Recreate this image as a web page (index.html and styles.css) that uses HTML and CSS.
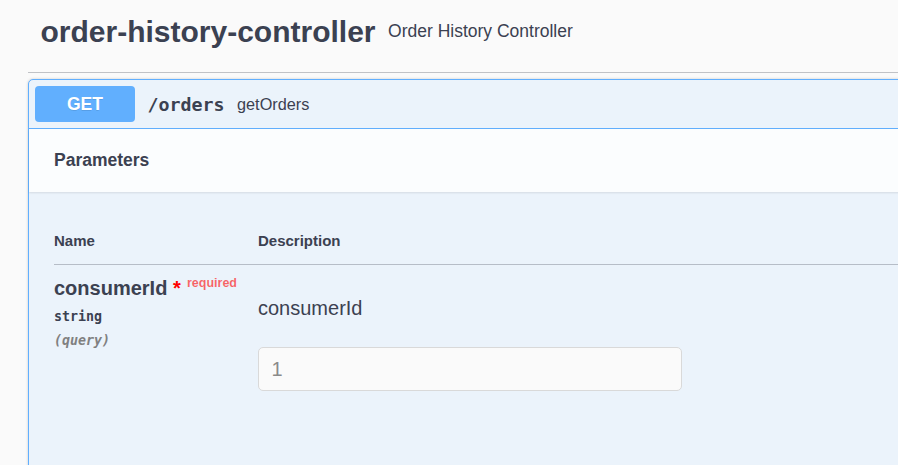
FILE: index.html
```html
<!DOCTYPE html>
<html lang="en">
<head>
<meta charset="utf-8">
<title>order-history-controller</title>
<link rel="stylesheet" href="styles.css">
</head>
<body>
<div class="page">
  <div class="tag">
    <h3 class="tag-title">order-history-controller</h3>
    <small class="tag-desc">Order History Controller</small>
  </div>
  <div class="opblock">
    <div class="summary">
      <span class="method">GET</span>
      <span class="path">/orders</span>
      <span class="summary-desc">getOrders</span>
    </div>
    <div class="section-header">
      <h4 class="section-title">Parameters</h4>
    </div>
    <div class="params">
      <div class="params-head">
        <div class="col-name">Name</div>
        <div class="col-desc">Description</div>
      </div>
      <div class="param-row">
        <div class="col-name">
          <div class="param-name">consumerId<span class="star">&nbsp;*</span><span class="req">required</span></div>
          <div class="param-type">string</div>
          <div class="param-in">(query)</div>
        </div>
        <div class="col-desc">
          <p class="param-desc">consumerId</p>
          <input class="param-input" type="text" value="1">
        </div>
      </div>
    </div>
  </div>
</div>
</body>
</html>
```
FILE: styles.css
```css
html, body {
  margin: 0;
  padding: 0;
  background: #fafafa;
  overflow: hidden;
  width: 898px;
  height: 465px;
}

body {
  font-family: "Liberation Sans", Arial, sans-serif;
  color: #3b4151;
}

.page {
  width: 1100px;
  padding-left: 28px;
}

.tag {
  display: flex;
  align-items: center;
  padding: 14px 0 23px 12.5px;
  border-bottom: 1px solid rgba(59, 65, 81, 0.3);
  margin-bottom: 6px;
}

.tag-title {
  margin: 0;
  font-size: 30px;
  line-height: 35px;
  font-weight: 700;
}

.tag-desc {
  font-size: 17.5px;
  padding: 0 12.5px;
}

.opblock {
  width: 1070px;
  border: 1px solid #61affe;
  border-radius: 5px;
  background: #ebf3fb;
  box-shadow: 0 0 3px rgba(0, 0, 0, 0.19);
  min-height: 460px;
}

.summary {
  display: flex;
  align-items: center;
  padding: 6px;
  border-bottom: 1px solid #61affe;
}

.method {
  width: 100px;
  height: 36px;
  box-sizing: border-box;
  display: flex;
  align-items: center;
  justify-content: center;
  background: #61affe;
  color: #fff;
  border-radius: 4px;
  font-size: 17.5px;
  font-weight: 700;
  text-shadow: 0 1px 0 rgba(0, 0, 0, 0.1);
}

.path {
  padding: 0 12.5px;
  font-family: "DejaVu Sans Mono", monospace;
  font-weight: 700;
  font-size: 18.3px;
  color: #3b4151;
}

.summary-desc {
  font-size: 16.25px;
}

.section-header {
  display: flex;
  align-items: center;
  min-height: 62.5px;
  box-sizing: border-box;
  padding: 10px 25px;
  background: rgba(255, 255, 255, 0.8);
  box-shadow: 0 1px 2px rgba(0, 0, 0, 0.1);
}

.section-title {
  margin: 0;
  font-size: 17.5px;
  font-weight: 700;
}

.params {
  padding: 25px;
}

.params-head {
  display: grid;
  grid-template-columns: 204px 1fr;
  padding: 15px 0;
  border-bottom: 1px solid rgba(59, 65, 81, 0.3);
  font-size: 15px;
  font-weight: 700;
}

.param-row {
  display: grid;
  grid-template-columns: 204px 1fr;
  padding: 12.5px 0;
  align-items: start;
}

.param-name {
  font-size: 20px;
  font-weight: 700;
}

.star {
  color: red;
}

.req {
  position: relative;
  top: -7.5px;
  padding: 6.25px;
  font-size: 12.5px;
  color: rgba(255, 0, 0, 0.6);
}

.param-type {
  padding: 8.25px 0 0;
  font-family: "DejaVu Sans Mono", monospace;
  font-weight: 700;
  font-size: 13.3px;
  line-height: 17.5px;
}

.param-in {
  padding: 6.25px 0 0;
  font-family: "DejaVu Sans Mono", monospace;
  font-weight: 700;
  font-style: italic;
  font-size: 13.3px;
  line-height: 17.5px;
  color: #808080;
}

.param-desc {
  margin: 20px 0 27px;
  font-size: 20px;
}

.param-input {
  display: block;
  margin: 6.25px 0;
  width: 424px;
  height: 44px;
  box-sizing: border-box;
  padding: 0 12.5px;
  border: 1px solid #d9d9d9;
  border-radius: 5px;
  background: #fafafa;
  font-family: "Liberation Sans", Arial, sans-serif;
  font-size: 20px;
  color: #8a8a8a;
  outline: none;
}
```
